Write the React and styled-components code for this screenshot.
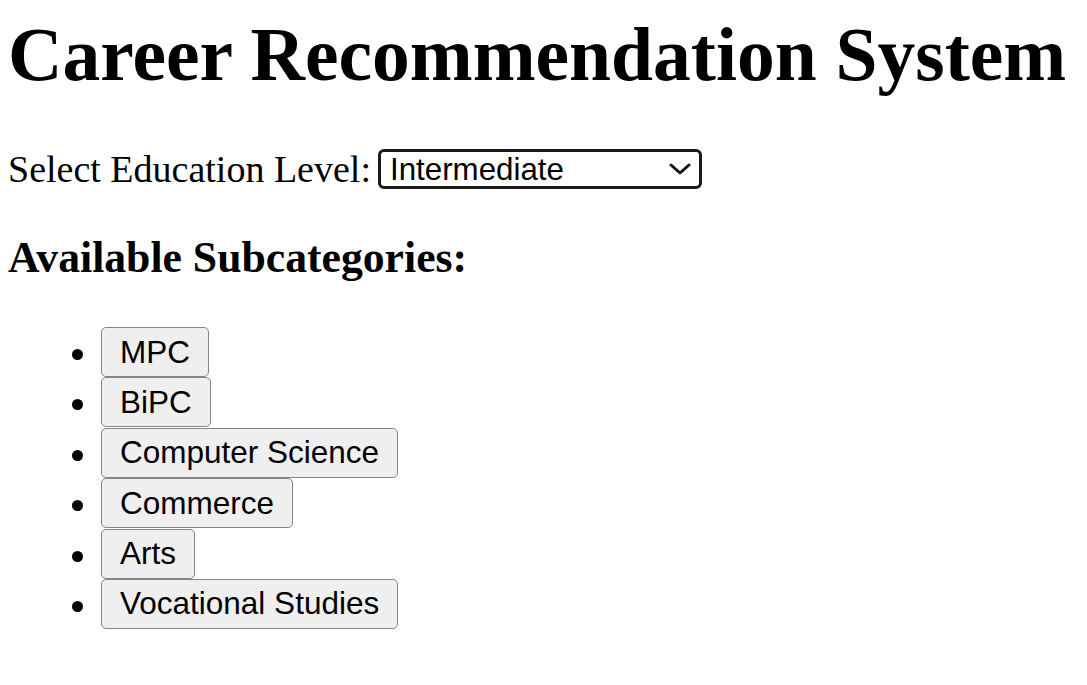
import React, { useState } from "react";
import styled, { createGlobalStyle } from "styled-components";

const GlobalStyle = createGlobalStyle`
	html, body {
		margin: 0;
		padding: 0;
		background: #fff;
	}
	body {
		font-family: "Liberation Serif", "Times New Roman", serif;
		color: #000;
	}
`;

const Page = styled.div`
	padding: 13px 8px 40px 8px;
`;

const Title = styled.h1`
	margin: 0;
	font-size: 75.5px;
	font-weight: 700;
	line-height: 1.107;
	white-space: nowrap;
`;

const LevelRow = styled.div`
	display: flex;
	align-items: center;
	gap: 7px;
	margin-top: 51px;
	font-size: 38px;
	line-height: 1.107;
`;

const SelectWrap = styled.div`
	position: relative;
	display: inline-flex;
`;

const LevelSelect = styled.select`
	appearance: none;
	width: 324px;
	height: 40px;
	box-sizing: border-box;
	border: 3px solid #1a1a1a;
	border-radius: 6px;
	background: #fff;
	padding: 0 40px 0 9px;
	font-family: "Liberation Sans", Arial, sans-serif;
	font-size: 31.3px;
	color: #000;
	outline: none;
`;

const Chevron = styled.svg`
	position: absolute;
	right: 11px;
	top: 14px;
	width: 22px;
	height: 12px;
	pointer-events: none;
`;

const SubTitle = styled.h3`
	margin: 43px 0 0 0;
	font-size: 43.7px;
	font-weight: 700;
	line-height: 1.107;
`;

const List = styled.ul`
	margin: 46px 0 0 0;
	padding-left: 93px;
	list-style: disc;
`;

const Item = styled.li`
	font-size: 38px;
	line-height: 50.4px;
	height: 50.4px;
`;

const SubButton = styled.button`
	vertical-align: top;
	height: 50px;
	box-sizing: border-box;
	padding: 0 18px;
	border: 1.6px solid #858585;
	border-radius: 5px;
	background: #efefef;
	font-family: "Liberation Sans", Arial, sans-serif;
	font-size: 31.5px;
	color: #000;
	cursor: pointer;
	&:active {
		background: #e5e5e5;
	}
`;

const levels = ["10th Class", "Intermediate", "Graduation", "Post Graduation"];

const subcategories = [
	"MPC",
	"BiPC",
	"Computer Science",
	"Commerce",
	"Arts",
	"Vocational Studies",
];

const App = () => {
	const [level, setLevel] = useState("Intermediate");

	return (
		<>
			<GlobalStyle />
			<Page>
				<Title>Career Recommendation System</Title>
				<LevelRow>
					<label htmlFor="level">Select Education Level:</label>
					<SelectWrap>
						<LevelSelect
							id="level"
							value={level}
							onChange={(e) => setLevel(e.target.value)}
						>
							{levels.map((l) => (
								<option key={l} value={l}>
									{l}
								</option>
							))}
						</LevelSelect>
						<Chevron viewBox="0 0 22 12" fill="none">
							<path
								d="M2 2 L11 10 L20 2"
								stroke="#111"
								strokeWidth="3"
								strokeLinecap="round"
								strokeLinejoin="round"
							/>
						</Chevron>
					</SelectWrap>
				</LevelRow>
				<SubTitle>Available Subcategories:</SubTitle>
				<List>
					{subcategories.map((s) => (
						<Item key={s}>
							<SubButton>{s}</SubButton>
						</Item>
					))}
				</List>
			</Page>
		</>
	);
};

export default App;
